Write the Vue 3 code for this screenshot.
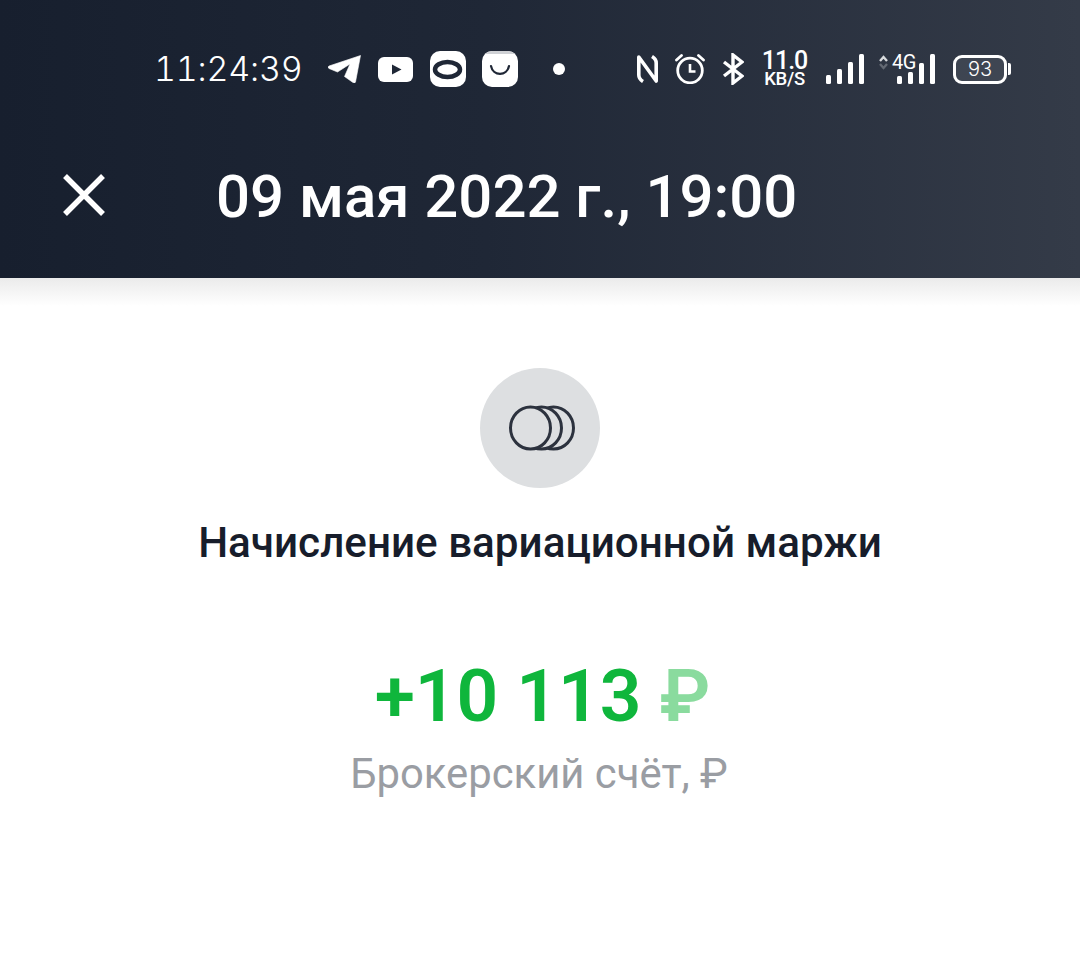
<template>
  <div class="screen">
    <header class="top">
      <div class="status">
        <span class="clock">11:24:39</span>
        <!-- notification icons -->
        <svg class="ic tg" width="33" height="28" viewBox="0 0 33 28"><path d="M32.500 0.500 L27.500 27 Q27 28.500 25 27.500 L16.500 21.500 L22 9 L9.500 17 L1 13.500 Q-1 12.500 1 11 Z" fill="#fff" stroke="#fff" stroke-width="0.6" stroke-linejoin="round"/></svg>
        <svg class="ic yt" width="35" height="25" viewBox="0 0 35 25"><rect width="35" height="25" rx="6" fill="#fff"/><path d="M14 7.500 L23.500 12.500 L14 17.500 Z" fill="#1f2736"/></svg>
        <svg class="ic ring" width="36" height="36" viewBox="0 0 36 36"><rect width="36" height="36" rx="10" fill="#fff"/><ellipse cx="17.500" cy="18.500" rx="12.500" ry="7.500" fill="none" stroke="#1f2736" stroke-width="4.500"/></svg>
        <svg class="ic smile" width="36" height="36" viewBox="0 0 36 36"><rect width="36" height="36" rx="10" fill="#fff"/><path d="M2.500 3 Q5 0.300 10 0 H26 Q31 0.300 33.500 3 Z" fill="#cfd1d5"/><path d="M9 15 C11 25.500 25 25.500 27 15" fill="none" stroke="#1f2736" stroke-width="2.200" stroke-linecap="round"/></svg>
        <span class="dot"></span>

        <svg class="ic nfc" width="21" height="28" viewBox="0 0 21 28"><path d="M6 26.500 Q1.800 24 1.800 20 V2 L19.200 26 V8 Q19.200 4 15 1.500" fill="none" stroke="#fff" stroke-width="3.600" stroke-linejoin="round"/></svg>
        <svg class="ic alarm" width="30" height="30" viewBox="0 0 30 30"><circle cx="15" cy="16.500" r="12.300" fill="none" stroke="#fff" stroke-width="2.800"/><path d="M15 10 V17.500 H20.500" fill="none" stroke="#fff" stroke-width="2.600"/><path d="M1.500 6 L6.500 1.500 M28.500 6 L23.500 1.500" stroke="#fff" stroke-width="2.800" stroke-linecap="round"/></svg>
        <svg class="ic bt" width="22" height="32" viewBox="0 0 22 32"><path d="M2 9 L20 23 L11 30 V2 L20 9 L2 23" fill="none" stroke="#fff" stroke-width="3.400"/></svg>
        <div class="speed"><b>11.0</b><small>KB/S</small></div>
        <svg class="ic sig" width="38" height="30" viewBox="0 0 38 30"><rect x="0" y="21" width="5" height="9" rx="1.500" fill="#fff"/><rect x="11" y="15" width="5" height="15" rx="1.500" fill="#fff"/><rect x="22" y="8" width="5" height="22" rx="1.500" fill="#fff"/><rect x="33" y="0" width="5" height="30" rx="1.500" fill="#fff"/></svg>
        <div class="net">
          <svg class="arrows" width="9" height="15" viewBox="0 0 9 15"><path d="M1 6 L4.500 2 L8 6" fill="none" stroke="#d8dadd" stroke-width="2.400"/><path d="M1 9 L4.500 13 L8 9" fill="none" stroke="#636973" stroke-width="2.400"/></svg>
          <span class="g4">4G</span>
          <svg class="bars" width="38" height="30" viewBox="0 0 38 30"><rect x="0" y="22" width="5" height="8" rx="1.500" fill="#fff"/><rect x="11" y="18" width="5" height="12" rx="1.500" fill="#fff"/><rect x="22" y="9" width="5" height="21" rx="1.500" fill="#fff"/><rect x="33" y="0" width="5" height="30" rx="1.500" fill="#fff"/></svg>
        </div>
        <div class="batt">
          <div class="batt-body">93</div>
          <span class="batt-cap"></span>
        </div>
      </div>
      <div class="bar">
        <svg class="close" width="44" height="44" viewBox="0 0 44 44"><path d="M3 3 L41 41 M41 3 L3 41" stroke="#fff" stroke-width="5.500"/></svg>
        <h1 class="title">09 мая 2022 г., 19:00</h1>
      </div>
    </header>
    <div class="fade"></div>

    <main class="body">
      <div class="badge">
        <svg width="70" height="46" viewBox="0 0 70 46"><ellipse cx="48.500" cy="23" rx="20" ry="21" fill="none" stroke="#2c323e" stroke-width="3"/><ellipse cx="36.500" cy="23" rx="20" ry="21" fill="#dddfe1" stroke="#2c323e" stroke-width="3"/><ellipse cx="25.500" cy="23" rx="20" ry="21" fill="#dddfe1" stroke="#2c323e" stroke-width="3"/></svg>
      </div>
      <div class="name">Начисление вариационной маржи</div>
      <div class="amount">+10 113 <span class="cur">₽</span></div>
      <div class="account">Брокерский счёт, ₽</div>
    </main>
  </div>
</template>

<script setup>
</script>

<style scoped>
.screen { width: 1080px; height: 953px; background: #fff; overflow: hidden; font-family: Roboto, "Liberation Sans", sans-serif; }
.top { height: 278px; box-sizing: border-box; padding-top: 51px; background: linear-gradient(90deg, #171f2e 0%, #1f2736 45%, #343b48 100%); color: #fff; }
.status { height: 36px; display: flex; align-items: center; padding-left: 156px; }
.clock { width: 144px; margin-left: -2px; margin-right: 2px; font-family: Inter, sans-serif; font-size: 34px; font-weight: 300; font-variant-numeric: tabular-nums; letter-spacing: -0.200px; line-height: 36px; white-space: nowrap; }
.ic { flex: none; }
.tg { margin-left: 28px; }
.yt { margin-left: 17px; }
.ring { margin-left: 17px; }
.smile { margin-left: 16px; }
.dot { width: 12px; height: 12px; margin-left: 35px; border-radius: 50%; background: #fff; }
.nfc { margin-left: 72px; }
.alarm { margin-left: 17px; }
.bt { margin-left: 17px; }
.speed { width: 43px; margin-left: 19px; display: flex; flex-direction: column; align-items: center; }
.speed b { font-size: 25px; font-weight: 500; letter-spacing: -1px; line-height: 20px; }
.speed small { font-size: 18.500px; font-weight: 500; letter-spacing: -0.300px; line-height: 16px; }
.sig { margin-left: 20px; }
.net { position: relative; width: 56px; height: 30px; margin-left: 15px; }
.arrows { position: absolute; left: 0; top: 1px; }
.g4 { position: absolute; left: 13px; top: 1px; font-size: 20px; letter-spacing: -0.500px; line-height: 15px; }
.bars { position: absolute; right: 0; top: 0; }
.batt { display: flex; align-items: center; margin-left: 18px; }
.batt-body { width: 54px; height: 29px; box-sizing: border-box; border: 3px solid #fff; border-radius: 9px; background: rgba(255,255,255,0.07); text-align: center; font-family: Inter, sans-serif; font-size: 20px; font-weight: 300; line-height: 23px; }
.batt-cap { width: 3px; height: 12px; margin-left: 1px; border-radius: 0 2px 2px 0; background: #fff; }
.bar { display: flex; align-items: center; margin-top: 75px; padding-left: 62px; }
.close { flex: none; margin-bottom: 4px; }
.title { margin: 0 0 0 110px; font-size: 59.900px; font-weight: 500; line-height: 70px; white-space: nowrap; }
.fade { height: 28px; background: linear-gradient(180deg, #ebebeb, #ffffff); }
.body { display: flex; flex-direction: column; align-items: center; padding-top: 62px; }
.badge { width: 120px; height: 120px; border-radius: 50%; background: #dddfe1; display: flex; align-items: center; justify-content: center; }
.name { margin-top: 30px; font-size: 42.200px; font-weight: 500; line-height: 50px; color: #171d2b; white-space: nowrap; }
.amount { margin-top: 86px; margin-left: 5px; font-size: 73px; font-weight: 600; line-height: 84px; color: #0fb63c; white-space: nowrap; }
.cur { color: #8adb9e; }
.account { margin-top: 11px; margin-right: 2px; font-size: 41.800px; line-height: 50px; color: #9a9da3; white-space: nowrap; }
</style>
